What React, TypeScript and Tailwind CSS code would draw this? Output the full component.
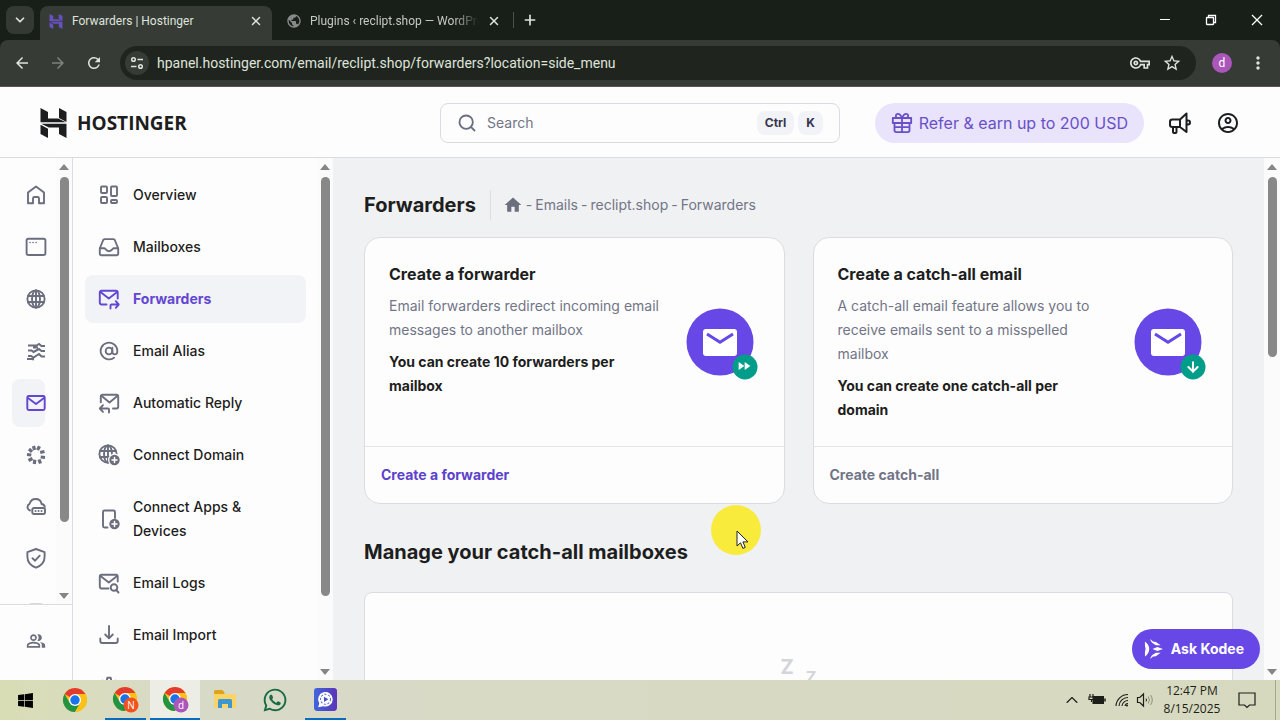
import type { ReactNode } from "react";
import { ArrowDown, AtSign, ChevronDown, ChevronUp, Plus, Search, X } from "lucide-react";
import { FaWhatsapp, FaWindows } from "react-icons/fa";
import {
  MdArrowBack,
  MdArrowForward,
  MdFastForward,
  MdHome,
  MdMoreVert,
  MdOutlineAccountCircle,
  MdOutlinePeopleAlt,
  MdOutlineVpnKey,
  MdPublic,
  MdRefresh,
  MdStarBorder,
} from "react-icons/md";

type IconProps = {
  children: ReactNode;
  className?: string;
};

function Icon({ children, className = "h-6 w-6" }: IconProps) {
  return (
    <svg
      viewBox="0 0 24 24"
      fill="none"
      stroke="currentColor"
      strokeWidth="1.9"
      strokeLinecap="round"
      strokeLinejoin="round"
      className={`shrink-0 ${className}`}
      aria-hidden="true"
    >
      {children}
    </svg>
  );
}

function HostingerMark({ className }: { className: string }) {
  return (
    <svg viewBox="0 0 26 30" fill="currentColor" className={className} aria-hidden="true">
      <path d="M0 0l7.5 4v6.4h10.2l7.6 3.900H0z" />
      <path d="M18.5 0L26 4v10l-7.5-4z" />
      <path d="M26 30l-7.5-4v-6.400H8.400L.8 15.700H26z" />
      <path d="M0 16.800l7.5 4V30L0 26z" />
    </svg>
  );
}

const globeLines = (
  <>
    <circle cx="12" cy="12" r="8.6" />
    <ellipse cx="12" cy="12" rx="4" ry="8.6" />
    <path d="M12 3.4v17.2M4 9h16M4 15h16" />
  </>
);

const railItems = [
  { label: "Home", icon: <path d="M4 20.2V9.5l8-6 8 6v10.7h-5v-4.7a1.5 1.5 0 0 0-1.5-1.5h-3A1.5 1.5 0 0 0 9 15.5v4.7z" /> },
  {
    label: "Websites",
    icon: (
      <>
        <rect x="2.6" y="3.8" width="18.8" height="16.2" rx="1.8" />
        <path strokeWidth="1.5" d="M6 7.5h.1M9 7.5h.1M12 7.5h.1" />
      </>
    ),
  },
  { label: "Domains", icon: globeLines },
  {
    label: "Horizons",
    icon: (
      <path
        strokeLinecap="butt"
        strokeLinejoin="miter"
        strokeWidth="2"
        d="M4 6.5h8.5L15 5l2.500 2H21M4 11.500h3.500L9.500 13l5.500-3 2.500 2H21M4 17h3l2.500 1.500L15 15l2.500 2.500H21M3 20h5l2 .5M9 8.500h5"
      />
    ),
  },
  {
    label: "Emails",
    active: true,
    icon: (
      <>
        <rect x="3.3" y="5" width="17.4" height="14" rx="1.5" />
        <path d="M4 7l8 6 8-6" />
      </>
    ),
  },
  {
    label: "Apps",
    icon: (
      <path
        strokeLinecap="butt"
        strokeWidth="3.2"
        d="M9.500 3l1 4M15.500 3.200l-2 3.800M20.500 8.500l-4.300 1M21 14.500l-4.300-.5M16.500 20.500l-1.500-4M10.300 21l.5-4.200M4.500 17.500l4-2M3 11.500l4.300.5M5 6l3 2.800"
      />
    ),
  },
  {
    label: "VPS",
    icon: (
      <>
        <path d="M6 15.500a3.600 3.600 0 0 1-.4-6.700C6.500 6 8.600 4 11.500 4c3.100 0 5.600 2 6.100 5 1.600.2 2.800 1.300 3.200 2.800" />
        <rect x="8.300" y="13" width="12.700" height="6" rx="1.800" />
        <path d="M11.500 16h.1M14.500 16h.1M17.500 16h.1" />
      </>
    ),
  },
  {
    label: "Security",
    icon: (
      <>
        <path d="M12 2l8.600 3.200v4.500c0 5-3.300 8.900-8.600 11-5.300-2.100-8.600-6-8.600-11V5.200z" />
        <path d="M8.500 11.200l2.600 2.500 4.600-5" />
      </>
    ),
  },
];

const menuItems = [
  {
    label: "Overview",
    icon: (
      <>
        <rect x="4" y="3.500" width="6" height="6.500" rx="1" />
        <rect x="14" y="3.500" width="6" height="9.500" rx="1" />
        <rect x="4" y="14" width="6" height="6" rx="1" />
        <rect x="14" y="17" width="6" height="3" rx="1" />
      </>
    ),
  },
  {
    label: "Mailboxes",
    icon: (
      <>
        <path d="M2.800 13.500L6.200 5a1.500 1.500 0 0 1 1.300-.9h9a1.500 1.500 0 0 1 1.300.9l3.400 8.500v5.300a1.400 1.400 0 0 1-1.400 1.400H4.200a1.400 1.400 0 0 1-1.400-1.400z" />
        <path d="M3 13.300h4.300c1 0 1.800 3 4.700 3s3.700-3 4.700-3H21" />
      </>
    ),
  },
  {
    label: "Forwarders",
    active: true,
    icon: (
      <>
        <path d="M9.500 17.500H4.500a1.700 1.700 0 0 1-1.700-1.700V5.400a1.700 1.700 0 0 1 1.700-1.700h14.500a1.700 1.700 0 0 1 1.700 1.700v6.100" />
        <path d="M3.800 5.300l8 6.200 8-6.200M13.500 21.500v-3a1 1 0 0 1 1-1h7M18.800 14.200l2.900 3.300-2.900 3.300" />
      </>
    ),
  },
  { label: "Email Alias" },
  {
    label: "Automatic Reply",
    icon: (
      <>
        <path d="M16 17.500h3.500a1.700 1.700 0 0 0 1.700-1.700V5.400a1.700 1.700 0 0 0-1.700-1.700H5.500a1.700 1.700 0 0 0-1.700 1.700v5.800" />
        <path d="M5 5.300l7.500 6.200 7.500-6.200M12 21.500v-3a1 1 0 0 0-1-1H3M6 14.200l-3.200 3.300L6 20.800" />
      </>
    ),
  },
  {
    label: "Connect Domain",
    icon: (
      <>
        <g transform="translate(-1 -1)">{globeLines}</g>
        <circle cx="17.500" cy="17" r="6.500" fill="#fdfdfe" stroke="none" />
        <circle cx="17.500" cy="17" r="5.200" fill="currentColor" stroke="none" />
        <path stroke="#fff" strokeWidth="1.500" d="M17.500 14.500v5M15 17h5" />
      </>
    ),
  },
  {
    label: "Connect Apps & Devices",
    icon: (
      <>
        <path d="M10.500 20.500h-3A1.500 1.500 0 0 1 6 19V5a1.500 1.500 0 0 1 1.500-1.500h9A1.500 1.500 0 0 1 18 5v6" />
        <circle cx="17.500" cy="17" r="5.200" fill="currentColor" stroke="none" />
        <path stroke="#fff" strokeWidth="1.500" d="M17.500 14.500v5M15 17h5" />
      </>
    ),
  },
  {
    label: "Email Logs",
    icon: (
      <>
        <path d="M11.500 17.500h-7a1.700 1.700 0 0 1-1.700-1.700V5.400a1.700 1.700 0 0 1 1.700-1.700h14.500a1.700 1.700 0 0 1 1.700 1.700v5.100" />
        <path d="M3.800 5.300l8 6.200 8-6.200M19.300 19l2.200 2.500" />
        <circle cx="17" cy="16.500" r="3.300" />
      </>
    ),
  },
  {
    label: "Email Import",
    icon: <path d="M12 3v12M8.200 11.500l3.800 3.800 3.800-3.800M3.300 15.500v2.500a2 2 0 0 0 2 2h13.400a2 2 0 0 0 2-2v-2.500" />,
  },
  {
    label: "Settings",
    icon: (
      <>
        <path d="M10.300 2.800h3.400l.5 2.700 1.900 1.100 2.600-.9 1.700 3-2.100 1.800v2.200l2.100 1.800-1.700 3-2.600-.9-1.900 1.100-.5 2.700h-3.400l-.5-2.700-1.900-1.100-2.600.9-1.700-3 2.100-1.800v-2.200L3.600 8.700l1.700-3 2.600.9 1.900-1.100z" />
        <circle cx="12" cy="11.600" r="3" />
      </>
    ),
  },
];

const cards = [
  {
    title: "Create a forwarder",
    text: "Email forwarders redirect incoming email messages to another mailbox",
    note: "You can create 10 forwarders per mailbox",
    action: "Create a forwarder",
    actionClass: "text-[#5c42cc]",
    badge: <MdFastForward x="52" y="55" width="18" height="18" color="#fff" />,
  },
  {
    title: "Create a catch-all email",
    text: "A catch-all email feature allows you to receive emails sent to a misspelled mailbox",
    note: "You can create one catch-all per domain",
    action: "Create catch-all",
    actionClass: "text-[#727586]",
    badge: <ArrowDown x="53" y="56" width="16" height="16" color="#fff" strokeWidth="3" />,
  },
];

type ScrollBarProps = {
  thumbClass: string;
};

function ScrollBar({ thumbClass }: ScrollBarProps) {
  return (
    <div className="flex w-4 shrink-0 flex-col items-center bg-[#fbfbfc]">
      <svg viewBox="0 0 16 19" className="h-[19px] w-4 shrink-0 fill-[#858585]">
        <path d="M3 12h10L8 6z" />
      </svg>
      <div className="flex min-h-0 w-full flex-1 justify-center">
        <div className={`w-[9px] rounded-full bg-[#888] ${thumbClass}`} />
      </div>
      <svg viewBox="0 0 16 16" className="h-4 w-4 shrink-0 fill-[#858585]">
        <path d="M3 5h10l-5 6z" />
      </svg>
    </div>
  );
}

function BrowserChrome() {
  return (
    <div className="shrink-0 bg-[#181e18] font-['Roboto',sans-serif] text-[#dfe3dc]">
      <div className="flex h-10 items-end">
        <button type="button" aria-label="Search tabs" className="mb-1.5 ml-1.5 flex h-7 w-7 items-center justify-center rounded-lg bg-[#343a33]">
          <ChevronDown className="h-3.5 w-3.5" strokeWidth={3} />
        </button>
        <div className="ml-1.5 flex h-[34px] w-[232px] items-center rounded-t-lg bg-[#363c35] px-2 pb-1">
          <HostingerMark className="h-[15px] w-4 text-[#6651bd]" />
          <span className="ml-2 flex-1 text-xs">Forwarders | Hostinger</span>
          <button type="button" aria-label="Close Forwarders tab" className="px-px">
            <X className="h-3.5 w-3.5" strokeWidth={2.500} />
          </button>
        </div>
        <div className="flex h-[34px] w-[241px] items-center pr-3 pb-1 pl-3.5">
          <MdPublic className="h-4 w-4 shrink-0 text-[#868b87]" />
          <span className="mr-2 ml-2 flex-1 overflow-hidden text-xs whitespace-nowrap text-[#c5c9c3] [mask-image:linear-gradient(to_right,black_85%,transparent)]">
            Plugins ‹ reclipt.shop — WordPress
          </span>
          <button type="button" aria-label="Close Plugins tab">
            <X className="h-3.5 w-3.5" strokeWidth={2.500} />
          </button>
        </div>
        <div className="mb-3 h-4 w-px bg-[#4a5048]" />
        <button type="button" aria-label="New tab" className="mb-3 ml-2">
          <Plus className="h-4 w-4" strokeWidth={2.500} />
        </button>
        <div className="ml-auto flex h-10 text-white">
          <button type="button" aria-label="Minimize" className="flex w-[46px] items-center justify-center">
            <svg viewBox="0 0 12 12" className="h-3 w-3 stroke-current"><path d="M1 5.500h10" /></svg>
          </button>
          <button type="button" aria-label="Restore" className="flex w-[46px] items-center justify-center">
            <svg viewBox="0 0 12 12" fill="none" className="h-3 w-3 stroke-current">
              <rect x="1.500" y="3.500" width="7" height="7" rx=".5" strokeWidth="1.300" />
              <path strokeWidth="1.300" d="M3.500 3.500v-2h7v7h-2" />
            </svg>
          </button>
          <button type="button" aria-label="Close" className="flex w-[46px] items-center justify-center">
            <svg viewBox="0 0 12 12" className="h-3 w-3 stroke-current"><path strokeWidth="1.300" d="M1 1l10 10M11 1L1 11" /></svg>
          </button>
        </div>
      </div>
      <div className="flex h-[47px] items-center rounded-t-lg border-b border-[#5d564f] bg-[#363c35] px-1">
        <button type="button" aria-label="Back" className="flex w-9 justify-center">
          <MdArrowBack className="h-[18px] w-[18px]" />
        </button>
        <button type="button" aria-label="Forward" className="flex w-9 justify-center text-[#7d827b]">
          <MdArrowForward className="h-[18px] w-[18px]" />
        </button>
        <button type="button" aria-label="Reload" className="flex w-9 justify-center">
          <MdRefresh className="h-[18px] w-[18px]" />
        </button>
        <div className="mx-2 flex h-[34px] flex-1 items-center rounded-full bg-[#1f251e] pr-3.5 pl-[5px]">
          <button type="button" aria-label="Site information" className="flex h-6 w-6 items-center justify-center rounded-full bg-[#363c35]">
            <svg viewBox="0 0 14 14" fill="none" strokeWidth="1.500" className="h-3.5 w-3.5 stroke-current">
              <circle cx="3.500" cy="3.500" r="1.800" />
              <path d="M7.500 3.500H13M1 10.500h5.500" />
              <circle cx="10.500" cy="10.500" r="1.800" />
            </svg>
          </button>
          <input
            type="text"
            aria-label="Address"
            defaultValue="hpanel.hostinger.com/email/reclipt.shop/forwarders?location=side_menu"
            className="ml-2 min-w-0 flex-1 bg-transparent text-sm outline-none"
          />
          <button type="button" aria-label="Saved passwords">
            <MdOutlineVpnKey className="h-5 w-5" />
          </button>
          <button type="button" aria-label="Bookmark" className="ml-3">
            <MdStarBorder className="h-5 w-5" />
          </button>
        </div>
        <button type="button" aria-label="Profile" className="flex w-9 justify-center">
          <span className="flex h-5 w-5 items-center justify-center rounded-full bg-[#ab56bb] text-xs text-white">d</span>
        </button>
        <button type="button" aria-label="Browser menu" className="flex w-9 justify-center">
          <MdMoreVert className="h-5 w-5" />
        </button>
      </div>
    </div>
  );
}

function Header() {
  return (
    <header className="grid h-[71px] shrink-0 grid-cols-[1fr_400px_1fr] items-center border-b border-[#dadce0] bg-[#fdfdfe] px-10 pt-px">
      <a href="#home" className="flex items-center gap-2.5 text-[#1d1e20]">
        <HostingerMark className="h-[30px] w-[27px]" />
        <span className="font-['Open_Sans',sans-serif] text-[19px] leading-6 font-bold">HOSTINGER</span>
      </a>
      <label className="flex h-10 items-center rounded-lg border border-[#dadce0] bg-[#fdfdfe] px-4">
        <Search className="h-5 w-5 text-[#6b6e7d]" strokeWidth={2.200} />
        <input
          type="text"
          aria-label="Search"
          placeholder="Search"
          className="ml-2.5 min-w-0 flex-1 bg-transparent text-sm outline-none placeholder:text-[#727586]"
        />
        <kbd className="flex h-6 items-center rounded-lg bg-[#f2f3f6] px-2 font-['Inter',sans-serif] text-xs font-bold text-[#36344d]">Ctrl</kbd>
        <kbd className="ml-1 flex h-6 items-center rounded-lg bg-[#f2f3f6] px-2 font-['Inter',sans-serif] text-xs font-bold text-[#36344d]">K</kbd>
      </label>
      <div className="flex items-center justify-end gap-6 text-[#1d1e20]">
        <button type="button" className="flex h-10 items-center gap-1.5 rounded-full bg-[#e9e3fc] px-4 text-base whitespace-nowrap text-[#6a50c8]">
          <svg
            viewBox="0 0 24 24"
            fill="none"
            stroke="currentColor"
            strokeWidth="2"
            strokeLinejoin="round"
            className="h-[22px] w-[22px]"
            aria-hidden="true"
          >
            <path d="M2 6.500h20v5.500H2zM3.800 12v8a2 2 0 0 0 2 2h12.400a2 2 0 0 0 2-2v-8M12 6.500V22M4 16.500h16M12 6.500C11 4 9.800 2 7.500 2 5 2 4.500 5 6.500 6.500M12 6.500C13 4 14.200 2 16.500 2c2.500 0 3 3 1 4.500" />
          </svg>
          Refer &amp; earn up to 200 USD
        </button>
        <button type="button" aria-label="Announcements">
          <Icon>
            <path strokeWidth="2" d="M18.500 2.500v18.500l-6.500-5H4.300A2.300 2.300 0 0 1 2 13.700V10.800a2.300 2.300 0 0 1 2.300-2.300H12zM12 8.500V16M5 16v5a1 1 0 0 0 1 1h1.500a1 1 0 0 0 1-1v-5M19.500 9.500h.5a2 2 0 0 1 0 4h-.5" />
          </Icon>
        </button>
        <button type="button" aria-label="Account">
          <MdOutlineAccountCircle className="h-[26px] w-6" />
        </button>
      </div>
    </header>
  );
}

function Rail() {
  return (
    <nav aria-label="Products" className="flex w-[73px] shrink-0 flex-col border-r border-[#dadce0] bg-[#fdfdfe] text-[#6b6e7d]">
      <div className="flex min-h-0 flex-1">
        <ul className="flex flex-1 flex-col gap-1 overflow-hidden pt-[13px] pl-3">
          {railItems.map((item) => (
            <li key={item.label}>
              <a
                href={`#${item.label.toLowerCase()}`}
                aria-label={item.label}
                className={`flex h-12 w-[33px] items-center rounded-lg pl-3 ${item.active ? "bg-[#f2f3f6] text-[#6346d2]" : ""}`}
              >
                <Icon>{item.icon}</Icon>
              </a>
            </li>
          ))}
          <li className="mt-4 ml-4 h-4 w-4 shrink-0 rounded bg-[#d8d9de]" />
        </ul>
        <ScrollBar thumbClass="h-[84%]" />
      </div>
      <div className="flex h-[76px] items-center justify-center border-t border-[#dadce0] pb-1">
        <a href="#accounts" aria-label="Account sharing">
          <MdOutlinePeopleAlt className="h-5 w-5" />
        </a>
      </div>
    </nav>
  );
}

function SideMenu() {
  return (
    <nav aria-label="Emails" className="flex w-[260px] shrink-0 bg-[#fdfdfe]">
      <ul className="flex flex-1 flex-col gap-1 overflow-hidden pt-[13px] pr-[11px] pl-3">
        {menuItems.map((item) => (
          <li key={item.label} className="shrink-0">
            <a
              href={`#${item.label.toLowerCase().replaceAll(" ", "-")}`}
              className={`flex min-h-12 items-center gap-3 rounded-lg py-3 pr-8 pl-3 text-sm leading-6 ${
                item.active ? "bg-[#f2f3f6] font-bold text-[#6346d2]" : "font-medium text-[#1d1e20]"
              }`}
            >
              <span className={item.active ? "text-[#6346d2]" : "text-[#6b6e7d]"}>
                {item.icon ? <Icon>{item.icon}</Icon> : <AtSign className="mx-0.5 h-5 w-5" strokeWidth={2.200} />}
              </span>
              {item.label}
            </a>
          </li>
        ))}
      </ul>
      <ScrollBar thumbClass="h-[86%]" />
    </nav>
  );
}

function Forwarders() {
  return (
    <main className="min-w-0 flex-1 overflow-hidden bg-[#f0f1f3] px-[31px] pt-8">
      <div className="flex h-[30px] items-center">
        <h1 className="text-xl font-bold text-[#1d1e20]">Forwarders</h1>
        <div className="ml-3.5 h-[30px] w-px bg-[#dadfe2]" />
        <nav aria-label="Breadcrumb" className="ml-3 flex items-center gap-[3px] text-sm text-[#727586]">
          <a href="#home" aria-label="Home">
            <MdHome className="h-5 w-5 text-[#6b6e7d]" />
          </a>
          <span>-</span>
          <a href="#emails">Emails</a>
          <span>-</span>
          <a href="#domain">reclipt.shop</a>
          <span>-</span>
          <span>Forwarders</span>
        </nav>
      </div>

      <div className="mt-[17px] grid grid-cols-2 gap-7">
        {cards.map((card) => (
          <section key={card.title} className="flex flex-col rounded-2xl border border-[#dadce0] bg-[#fdfdfe]">
            <div className="flex flex-1 items-center gap-6 p-6">
              <div className="flex-1 self-stretch text-sm leading-6">
                <h2 className="text-base leading-6 font-bold text-[#1d1e20]">{card.title}</h2>
                <p className="mt-2 text-[#727586]">{card.text}</p>
                <p className="mt-2 font-bold text-[#1d1e20]">{card.note}</p>
              </div>
              <svg viewBox="0 0 76 78" className="h-[78px] w-[76px] shrink-0" aria-hidden="true">
                <circle cx="36" cy="39" r="33.500" fill="#6747e6" />
                <rect x="19" y="26" width="34" height="27" rx="3" fill="#fff" />
                <path d="M23 31l13 8.300L49 31" fill="none" stroke="#6747e6" strokeWidth="3" />
                <circle cx="61" cy="64" r="12.500" fill="#009e8a" />
                {card.badge}
              </svg>
            </div>
            <div className="border-t border-[#e4e5e8] px-4 py-4">
              <button type="button" className={`block text-sm leading-6 font-bold ${card.actionClass}`}>
                {card.action}
              </button>
            </div>
          </section>
        ))}
      </div>

      <h2 className="mt-8 text-xl leading-8 font-bold text-[#1d1e20]">Manage your catch-all mailboxes</h2>
      <section className="mt-6 h-60 rounded-lg border border-[#dadce0] bg-[#fdfdfe] pt-[60px]">
        <div className="flex items-start justify-center gap-3 font-bold text-[#d3d5d8]" aria-hidden="true">
          <span className="text-xl leading-7">Z</span>
          <span className="mt-3 text-base leading-6">Z</span>
        </div>
      </section>
    </main>
  );
}

function ChromeLogo({ children }: { children?: ReactNode }) {
  return (
    <svg viewBox="0 0 28 28" className="h-7 w-7" aria-hidden="true">
      <circle cx="14" cy="14" r="12" fill="#fbc116" />
      <path d="M14 14L3.600 8a12 12 0 0 1 20.800 0z" fill="#e33b2e" />
      <path d="M3.600 8A12 12 0 0 0 14 26l5.200-9L14 14l-5.200 3z" fill="#229342" />
      <path d="M14 8h10.400a12 12 0 0 1 0 12L14 26l5.200-9z" fill="#fbc116" />
      <circle cx="14" cy="14" r="6" fill="#fff" />
      <circle cx="14" cy="14" r="4.700" fill="#1a73e8" />
      {children}
    </svg>
  );
}

function ProfileBadge({ letter, color }: { letter: string; color: string }) {
  return (
    <>
      <circle cx="20" cy="20" r="7.500" fill={color} />
      <text x="20" y="23.500" textAnchor="middle" fontSize="10" fill="#fff">{letter}</text>
    </>
  );
}

const taskbarApps = [
  { label: "Start", icon: <FaWindows className="h-[17px] w-[17px] text-black" />, state: "" },
  { label: "Chrome", icon: <ChromeLogo />, state: "" },
  { label: "Chrome, profile N", icon: <ChromeLogo><ProfileBadge letter="N" color="#f4511e" /></ChromeLogo>, state: "open" },
  { label: "Chrome, profile d", icon: <ChromeLogo><ProfileBadge letter="d" color="#ab56bb" /></ChromeLogo>, state: "current" },
  {
    label: "File Explorer",
    icon: (
      <svg viewBox="0 0 24 22" className="h-[22px] w-6">
        <path d="M1 4V2.500A1.500 1.500 0 0 1 2.500 1h7l2 2.500V7H1z" fill="#e0a21b" />
        <path d="M1 5h20.500A1.500 1.500 0 0 1 23 6.500V19H1z" fill="#fbd467" />
        <path d="M5 19v-7.500A1.500 1.500 0 0 1 6.500 10h11a1.500 1.500 0 0 1 1.500 1.500V19h-4v-4H9v4z" fill="#3f97cf" />
      </svg>
    ),
    state: "",
  },
  { label: "WhatsApp", icon: <FaWhatsapp className="h-[26px] w-[26px] text-[#176b43]" />, state: "" },
  {
    label: "Video app",
    icon: (
      <svg viewBox="0 0 22 22" className="h-[23px] w-[23px]">
        <defs>
          <linearGradient id="video-app" x1="0" x2="1">
            <stop offset="0" stopColor="#3f65dc" />
            <stop offset="1" stopColor="#5b35b8" />
          </linearGradient>
        </defs>
        <rect width="22" height="22" rx="3" fill="url(#video-app)" />
        <path d="M4 18.500l1-4A7 7 0 1 1 9 17.500z" fill="#fff" />
        <circle cx="11" cy="10.800" r="4.800" fill="none" stroke="#6075d8" strokeDasharray="2 1.500" />
        <path d="M9.500 8.300l4.300 2.500-4.300 2.500z" fill="#4a50c8" />
      </svg>
    ),
    state: "open",
  },
];

function Taskbar() {
  return (
    <footer className="flex h-10 shrink-0 items-stretch bg-gradient-to-r from-[#d9ddb5] via-[#d8dac8] via-15% to-[#d7d9bf] font-['Open_Sans',sans-serif] text-[#1c1e18]">
      {taskbarApps.map((app) => (
        <button
          type="button"
          key={app.label}
          aria-label={app.label}
          className={`flex w-[50px] flex-col items-center ${app.state === "current" ? "bg-[#ecede4]" : ""}`}
        >
          <span className="flex flex-1 items-center">{app.icon}</span>
          {app.state !== "" && <span className={`h-0.5 bg-[#0a6cbd] ${app.state === "current" ? "w-full" : "w-[41px]"}`} />}
        </button>
      ))}
      <div className="ml-auto flex items-center pr-1">
        <ChevronUp className="h-5 w-5" strokeWidth={1.300} />
        <svg viewBox="0 0 18 14" className="ml-1.5 h-3.5 w-[18px]" fill="none" stroke="currentColor">
          <path d="M2 1v3M5 1v3M1 4h5v2.500H1zM3.500 6.500V9" strokeWidth="1.200" />
          <rect x="5" y="3.500" width="10.500" height="7" fill="currentColor" />
          <path d="M17 5.500v3" strokeWidth="1.500" />
        </svg>
        <svg viewBox="0 0 16 16" className="ml-2 h-4 w-4" fill="none" stroke="currentColor" strokeWidth="1.100">
          <path d="M2 14A12 12 0 0 1 14 2.500M5 14a9 9 0 0 1 9-8.500M8 14a6 6 0 0 1 6-5.500M11 14a3 3 0 0 1 3-2.500" />
          <circle cx="13" cy="13.500" r="1" fill="currentColor" stroke="none" />
        </svg>
        <svg viewBox="0 0 18 16" className="ml-1.5 h-4 w-[18px]" fill="none" stroke="currentColor">
          <path d="M1.500 5.500h2.300L7.500 2v12l-3.700-3.500H1.500z" strokeWidth="1.200" />
          <path d="M10 6.500q1 1.500 0 3" />
          <path d="M12.200 4.500q2.500 3.500 0 7M14.500 3q3.500 5 0 10" opacity=".4" />
        </svg>
        <div className="ml-2 w-[60px] text-center text-xs leading-[18px] whitespace-nowrap">
          <p>12:47 PM</p>
          <p>8/15/2025</p>
        </div>
        <svg viewBox="0 0 18 18" className="ml-4 h-[18px] w-[18px]" fill="none" stroke="currentColor" strokeWidth="1.200">
          <path d="M1 2h16v12h-5.500L9 16.500 6.500 14H1z" />
        </svg>
        <div className="ml-[19px] h-10 w-px bg-[#a5a78f]" />
      </div>
    </footer>
  );
}

export default function App() {
  return (
    <div className="relative flex h-screen flex-col overflow-hidden bg-[#fdfdfe] font-['Inter',sans-serif]">
      <BrowserChrome />
      <Header />
      <div className="relative flex min-h-0 flex-1">
        <Rail />
        <SideMenu />
        <Forwarders />
        <ScrollBar thumbClass="h-[37%]" />
        <button type="button" className="absolute right-5 bottom-[11px] flex h-10 items-center gap-2 rounded-full bg-[#6747e6] pr-4 pl-3 text-sm font-bold text-white">
          <svg viewBox="0 0 20 22" className="h-[22px] w-[19px] fill-current" aria-hidden="true">
            <path d="M1 3q4.500 3.500 4.500 8T1 19V14q1.500-3 0-6z" />
            <path d="M6.500.5q.5 2.500 2 4l4 2.500h5l-5-3.500-3-.5z" />
            <path d="M6.500 21.500q.5-2.500 2-4l4-2.500h5l-5 3.500-3 .5z" />
            <path d="M9 11l5-2.200L20 11l-6 2.200z" />
          </svg>
          Ask Kodee
        </button>
      </div>
      <Taskbar />

      {/* Pointer with its click highlight */}
      <div className="pointer-events-none absolute top-[505px] left-[711px] h-[50px] w-[50px] rounded-full bg-[#f8eb3c]">
        <svg viewBox="0 0 14 20" className="absolute top-[25px] left-[25px] h-5 w-3.5" aria-hidden="true">
          <path d="M1 1v15l3.500-3.200 2.400 5.600 2.400-1-2.400-5.500H12z" fill="#fff" stroke="#222" strokeWidth="1" />
        </svg>
      </div>
    </div>
  );
}
